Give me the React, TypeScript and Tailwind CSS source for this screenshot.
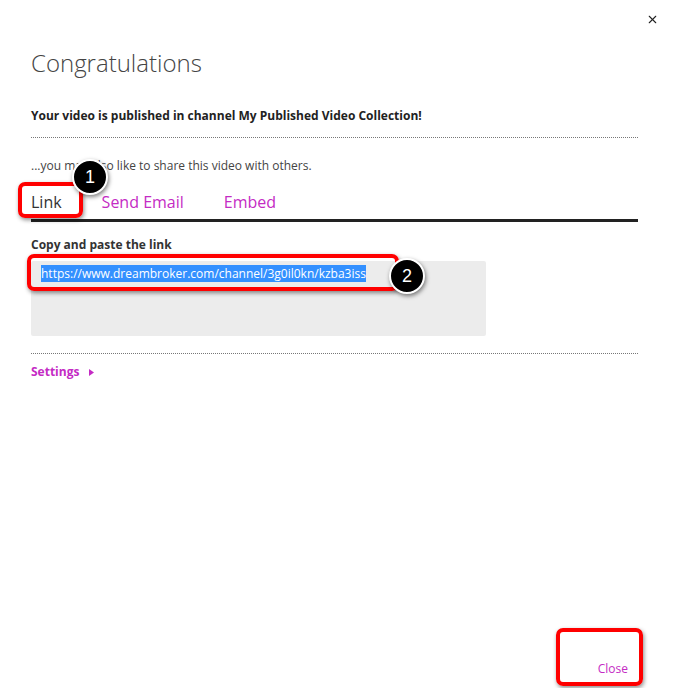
import { X } from "lucide-react";

const MAGENTA = "text-[#c42bc4]";

function Badge({ n, className }: { n: number; className: string }) {
  return (
    <div
      className={`absolute w-[36px] h-[36px] rounded-full bg-black border-2 border-white shadow-[1px_2px_4px_rgba(0,0,0,0.5)] flex items-center justify-center text-white text-[18px] font-['Liberation_Sans',sans-serif] ${className}`}
    >
      {n}
    </div>
  );
}

function RedBox({ className }: { className: string }) {
  return (
    <div
      className={`absolute border-4 border-[#f00] rounded-[7px] shadow-[1px_2px_4px_rgba(0,0,0,0.45)] pointer-events-none ${className}`}
    />
  );
}

export default function App() {
  return (
    <div className="relative w-[676px] h-[688px] bg-white overflow-hidden font-['Open_Sans',sans-serif] text-[#333] flex flex-col">
      <div className="flex justify-end pt-[13px] pr-[17px]">
        <button className="text-[#222]">
          <X className="w-[13px] h-[13px]" strokeWidth={2} />
        </button>
      </div>

      <div className="px-[31px] pt-[20px] w-[669px]">
        <h1 className="text-[24px] font-light leading-[34px] text-[#444]">Congratulations</h1>

        <p className="mt-[28px] text-[12px] font-bold leading-[16px] text-[#222]">
          Your video is published in channel My Published Video Collection!
        </p>
        <div className="mt-[13px] border-t border-dotted border-[#777]" />

        <p className="mt-[20px] text-[12px] leading-[16px] text-[#444]">
          ...you may also like to share this video with others.
        </p>

        <div className="mt-[17px] flex items-end gap-[40px] border-b-[3px] border-[#222] pb-[6px] text-[16px] leading-[22px]">
          <span className="text-[#333]">Link</span>
          <span className={MAGENTA}>Send Email</span>
          <span className={MAGENTA}>Embed</span>
        </div>

        <p className="mt-[15px] text-[12px] font-bold leading-[16px] text-[#333]">Copy and paste the link</p>

        <div className="mt-[8px] w-[455px] h-[75px] bg-[#ececec] rounded-[2px] px-[10px] pt-[5px] text-[12px] leading-[16px]">
          <span className="bg-[#3390ff] text-white">
            https://www.dreambroker.com/channel/3g0il0kn/kzba3iss
          </span>
        </div>

        <div className="mt-[17px] border-t border-dotted border-[#777]" />

        <div className={`mt-[10px] flex items-center gap-[10px] text-[12px] font-bold leading-[16px] ${MAGENTA}`}>
          <span>Settings</span>
          <svg width="5" height="7" viewBox="0 0 5 7">
            <path d="M0 0 L5 3.5 L0 7 Z" fill="currentColor" />
          </svg>
        </div>
      </div>

      <div className="mt-auto flex justify-end pr-[48px] pb-[11px]">
        <span className={`text-[12px] leading-[16px] ${MAGENTA}`}>Close</span>
      </div>

      <RedBox className="left-[18px] top-[182px] w-[65px] h-[36px]" />
      <Badge n={1} className="left-[72px] top-[159px]" />

      <RedBox className="left-[27px] top-[254px] w-[372px] h-[37px]" />
      <Badge n={2} className="left-[389px] top-[258px]" />

      <RedBox className="left-[556px] top-[628px] w-[87px] h-[58px]" />
    </div>
  );
}
